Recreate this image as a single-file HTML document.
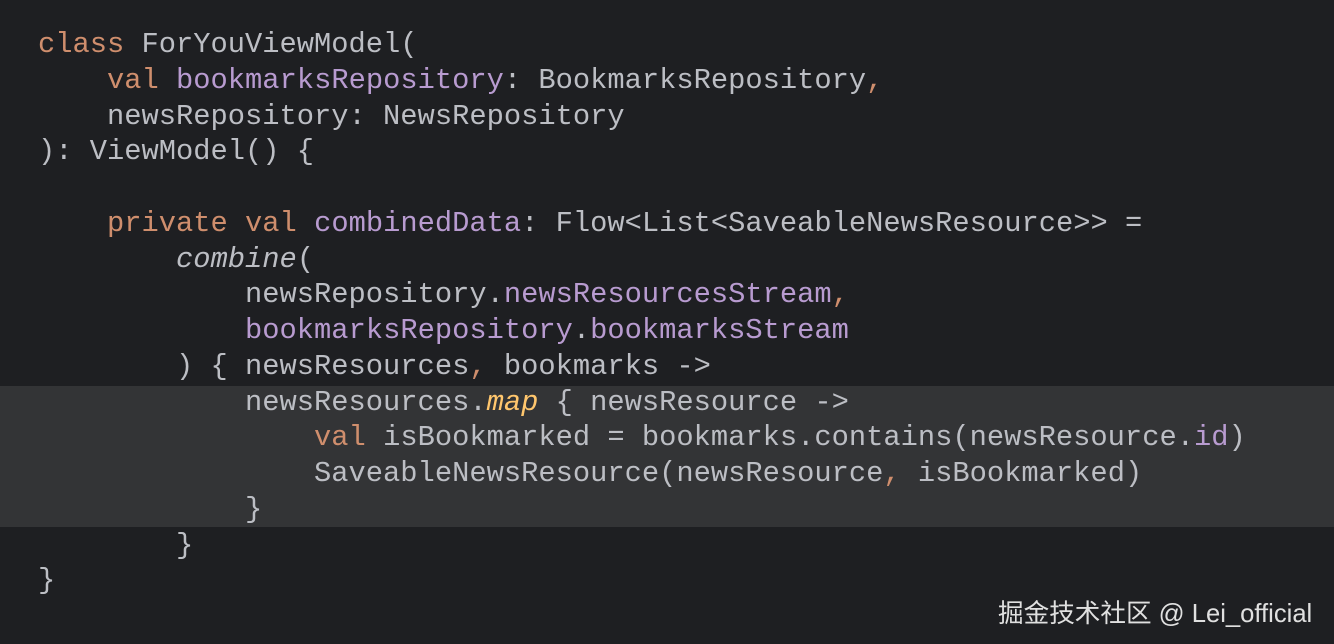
<!DOCTYPE html>
<html><head><meta charset="utf-8"><style>
html,body{margin:0;padding:0;width:1334px;height:644px;overflow:hidden;background:#1e1f22;}
.hl{position:absolute;left:0;top:386px;width:1334px;height:141px;background:#333436;}
pre{position:absolute;left:38px;top:27px;margin:0;font-family:"Liberation Mono",monospace;font-size:28.75px;line-height:35.75px;color:#bcbec4;}
.k{color:#cf8e6d}.p{color:#b89bd0}.i{font-style:italic}.y{color:#ffc66d;font-style:italic}
.wm{position:absolute;left:998px;top:593px;font-family:"Liberation Sans","Noto Sans CJK SC",sans-serif;font-size:25.6px;color:#e0e0e0;}
</style></head><body>
<div class="hl"></div>
<pre><span class="k">class</span> ForYouViewModel(
    <span class="k">val</span> <span class="p">bookmarksRepository</span>: BookmarksRepository<span class="k">,</span>
    newsRepository: NewsRepository
): ViewModel() {

    <span class="k">private val</span> <span class="p">combinedData</span>: Flow&lt;List&lt;SaveableNewsResource&gt;&gt; =
        <span class="i">combine</span>(
            newsRepository.<span class="p">newsResourcesStream</span><span class="k">,</span>
            <span class="p">bookmarksRepository</span>.<span class="p">bookmarksStream</span>
        ) { newsResources<span class="k">,</span> bookmarks -&gt;
            newsResources.<span class="y">map</span> { newsResource -&gt;
                <span class="k">val</span> isBookmarked = bookmarks.contains(newsResource.<span class="p">id</span>)
                SaveableNewsResource(newsResource<span class="k">,</span> isBookmarked)
            }
        }
}</pre>
<div class="wm">掘金技术社区 @ Lei_official</div>
</body></html>
